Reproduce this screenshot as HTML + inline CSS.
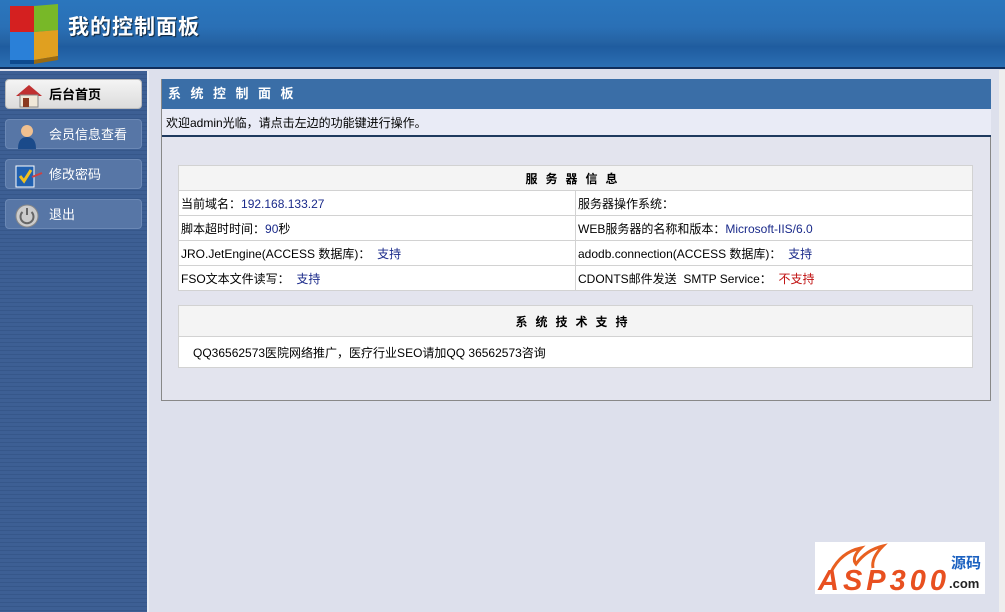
<!DOCTYPE html>
<html><head><meta charset="utf-8"><style>
*{margin:0;padding:0;box-sizing:border-box}
body{width:1005px;height:612px;overflow:hidden;position:relative;background:#dde0ec;font-family:"Liberation Sans","Noto Sans CJK SC",sans-serif;font-size:12px;color:#000}
.abs{position:absolute}
#hdr{left:0;top:0;width:1005px;height:69px;background:linear-gradient(#2b76bd 0,#2a70b6 40%,#2563a4 62%,#1f5c9f 70%,#2b6fb3 100%);border-bottom:2px solid #0f2e5c}
#title{left:68px;top:11px;color:#fff;font-size:21px;font-weight:bold;letter-spacing:1px;text-shadow:1px 1px 1px #123}
#side{left:0;top:71px;width:149px;height:541px;background:repeating-linear-gradient(#3d5f94 0,#3d5f94 3px,#36578a 3px,#36578a 4px);border-right:2px solid #e8ecf4}
.btn{position:absolute;left:5px;width:137px;height:30px;border-radius:4px;background:#5776a6;border:1px solid #6b88b5;color:#fff;font-size:13px;line-height:30px;padding-left:43px}
.btn.on{background:linear-gradient(#f4f4f4,#dcdcdc);color:#000;font-weight:bold;border-color:#bbb}
.ic{position:absolute;left:8px;top:3px}
#panel{left:161px;top:79px;width:830px;height:322px;border:1px solid #888;border-top:none;background:#e3e4ee}
#ptitle{left:0;top:0;width:829px;height:30px;background:#3a6ea7;color:#fff;font-weight:bold;font-size:13px;line-height:30px;padding-left:6px;letter-spacing:9.5px}
#welcome{left:0;top:30px;width:829px;height:28px;background:#e9ebf6;border-bottom:2px solid #1f3a5e;line-height:28px;padding-left:4px;font-size:12px}
table{position:absolute;border-collapse:collapse;background:#fff;font-size:12px}
td{border:1px solid #d2d2d2;height:25px;padding-left:2px}
th{background:#f4f4f4;border:1px solid #d2d2d2;height:25px;font-weight:bold;letter-spacing:8px;font-size:12px}
.b{color:#1a2a8a}.r{color:#c01010}
#scroll{left:999px;top:70px;width:6px;height:542px;background:#eee}
</style></head><body>
<div id="hdr" class="abs">
<svg class="abs" style="left:6px;top:2px" width="54" height="64" viewBox="0 0 54 64">
<polygon points="4,4 28,4 28,30 4,30" fill="#d42020"/><polygon points="28,4 52,2 52,28 28,30" fill="#78b828"/>
<polygon points="4,30 28,30 28,58 4,58" fill="#2a80d8"/><polygon points="28,30 52,28 52,54 28,58" fill="#e0a020"/>
<polygon points="4,58 28,58 28,62 4,62" fill="#0d4a90"/><polygon points="28,58 52,54 52,58 28,62" fill="#9a6a10"/>
</svg>
<div id="title" class="abs">我的控制面板</div>
</div>
<div id="side" class="abs">
<div class="btn on" style="top:8px"><svg class="ic" width="30" height="26" viewBox="0 0 30 26"><polygon points="2,13 15,2 28,13" fill="#c03030"/><rect x="6" y="12" width="18" height="12" fill="#f0e8d8" stroke="#888"/><rect x="9" y="15" width="6" height="9" fill="#8a3a20"/></svg>后台首页</div>
<div class="btn" style="top:48px"><svg class="ic" width="26" height="26" viewBox="0 0 26 26"><circle cx="13" cy="8" r="6" fill="#f0c090"/><path d="M4 26 Q4 14 13 14 Q22 14 22 26Z" fill="#1a4a8a"/></svg>会员信息查看</div>
<div class="btn" style="top:88px"><svg class="ic" width="30" height="26" viewBox="0 0 30 26"><rect x="2" y="3" width="18" height="21" fill="#2060b0" stroke="#fff"/><path d="M6 13 L10 18 L17 7" stroke="#f0c020" stroke-width="3" fill="none"/><line x1="18" y1="14" x2="28" y2="10" stroke="#d04040" stroke-width="2"/></svg>修改密码</div>
<div class="btn" style="top:128px"><svg class="ic" width="26" height="26" viewBox="0 0 26 26"><circle cx="13" cy="13" r="11" fill="#ccc" stroke="#888"/><path d="M8.5 9 A6.5 6.5 0 1 0 17.5 9" stroke="#666" stroke-width="2" fill="none"/><line x1="13" y1="5" x2="13" y2="12" stroke="#666" stroke-width="2"/></svg>退出</div>
</div>
<div id="panel" class="abs">
<div id="ptitle" class="abs">系统控制面板</div>
<div id="welcome" class="abs">欢迎admin光临，请点击左边的功能键进行操作。</div>
<table style="left:16px;top:86px;width:795px">
<tr><th colspan="2">服务器信息</th></tr>
<tr><td style="width:397px">当前域名：<span class="b">192.168.133.27</span></td><td>服务器操作系统：</td></tr>
<tr><td>脚本超时时间：<span class="b">90</span>秒</td><td>WEB服务器的名称和版本：<span class="b">Microsoft-IIS/6.0</span></td></tr>
<tr><td>JRO.JetEngine(ACCESS 数据库)： &nbsp;<span class="b">支持</span></td><td>adodb.connection(ACCESS 数据库)： &nbsp;<span class="b">支持</span></td></tr>
<tr><td>FSO文本文件读写： &nbsp;<span class="b">支持</span></td><td>CDONTS邮件发送 &nbsp;SMTP Service： &nbsp;<span class="r">不支持</span></td></tr>
</table>
<table style="left:16px;top:226px;width:795px">
<tr><th style="height:31px">系统技术支持</th></tr>
<tr><td style="height:31px;padding-left:14px">QQ36562573医院网络推广，医疗行业SEO请加QQ 36562573咨询</td></tr>
</table>
</div>
<div class="abs" style="left:815px;top:542px;width:170px;height:52px;background:#fff">
<svg width="170" height="52" viewBox="0 0 170 52">
<path d="M16 30 Q26 10 46 6 Q36 16 41 22 Q51 8 68 4 Q56 16 58 26" fill="none" stroke="#e86020" stroke-width="3"/>
<text x="3" y="48" font-family="Liberation Sans" font-weight="bold" font-style="italic" font-size="29" fill="#e85020" textLength="128">ASP300</text>
<text x="136" y="26" font-family="Noto Sans CJK SC" font-weight="bold" font-size="15" fill="#1a60c0">源码</text>
<text x="134" y="46" font-family="Liberation Sans" font-weight="bold" font-size="13" fill="#222">.com</text>
</svg></div>
<div id="scroll" class="abs"></div>
</body></html>
